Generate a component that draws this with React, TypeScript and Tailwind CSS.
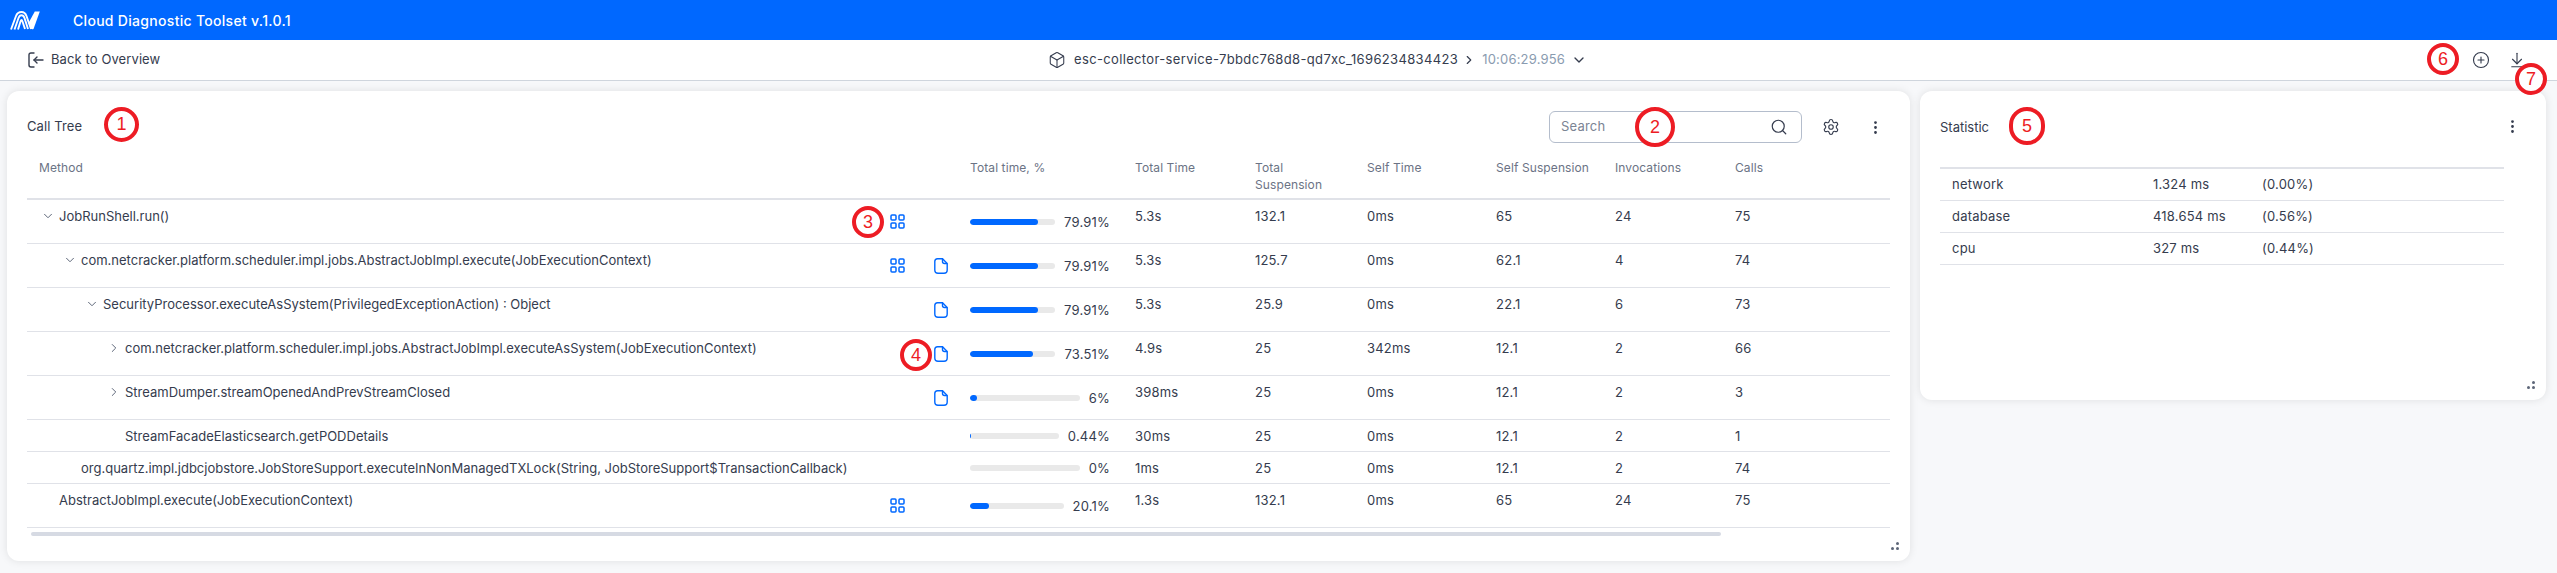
import React from 'react';
import { Box, ChevronDown, ChevronRight, CirclePlus, ArrowDownToLine, EllipsisVertical, Search, Settings } from 'lucide-react';

interface Row {
  method: string;
  depth: number;
  caret?: 'open' | 'closed';
  grid?: boolean;
  file?: boolean;
  percent: number;
  label: string;
  totalTime: string;
  totalSuspension: string;
  selfTime: string;
  selfSuspension: string;
  invocations: string;
  calls: string;
  tall: boolean;
}

const rows: Row[] = [
  { method: 'JobRunShell.run()', depth: 0, caret: 'open', grid: true, percent: 79.91, label: '79.91%', totalTime: '5.3s', totalSuspension: '132.1', selfTime: '0ms', selfSuspension: '65', invocations: '24', calls: '75', tall: true },
  { method: 'com.netcracker.platform.scheduler.impl.jobs.AbstractJobImpl.execute(JobExecutionContext)', depth: 1, caret: 'open', grid: true, file: true, percent: 79.91, label: '79.91%', totalTime: '5.3s', totalSuspension: '125.7', selfTime: '0ms', selfSuspension: '62.1', invocations: '4', calls: '74', tall: true },
  { method: 'SecurityProcessor.executeAsSystem(PrivilegedExceptionAction) : Object', depth: 2, caret: 'open', file: true, percent: 79.91, label: '79.91%', totalTime: '5.3s', totalSuspension: '25.9', selfTime: '0ms', selfSuspension: '22.1', invocations: '6', calls: '73', tall: true },
  { method: 'com.netcracker.platform.scheduler.impl.jobs.AbstractJobImpl.executeAsSystem(JobExecutionContext)', depth: 3, caret: 'closed', file: true, percent: 73.51, label: '73.51%', totalTime: '4.9s', totalSuspension: '25', selfTime: '342ms', selfSuspension: '12.1', invocations: '2', calls: '66', tall: true },
  { method: 'StreamDumper.streamOpenedAndPrevStreamClosed', depth: 3, caret: 'closed', file: true, percent: 6, label: '6%', totalTime: '398ms', totalSuspension: '25', selfTime: '0ms', selfSuspension: '12.1', invocations: '2', calls: '3', tall: true },
  { method: 'StreamFacadeElasticsearch.getPODDetails', depth: 3, percent: 0.44, label: '0.44%', totalTime: '30ms', totalSuspension: '25', selfTime: '0ms', selfSuspension: '12.1', invocations: '2', calls: '1', tall: false },
  { method: 'org.quartz.impl.jdbcjobstore.JobStoreSupport.executeInNonManagedTXLock(String, JobStoreSupport$TransactionCallback)', depth: 1, percent: 0, label: '0%', totalTime: '1ms', totalSuspension: '25', selfTime: '0ms', selfSuspension: '12.1', invocations: '2', calls: '74', tall: false },
  { method: 'AbstractJobImpl.execute(JobExecutionContext)', depth: 0, grid: true, percent: 20.1, label: '20.1%', totalTime: '1.3s', totalSuspension: '132.1', selfTime: '0ms', selfSuspension: '65', invocations: '24', calls: '75', tall: true },
];

const stats = [
  { name: 'network', value: '1.324 ms', share: '(0.00%)' },
  { name: 'database', value: '418.654 ms', share: '(0.56%)' },
  { name: 'cpu', value: '327 ms', share: '(0.44%)' },
];

const marks = [
  { n: '1', cls: 'left-[104px] top-[107px] w-[35px] h-[35px]' },
  { n: '2', cls: 'left-[1635px] top-[107px] w-[40px] h-[40px]' },
  { n: '3', cls: 'left-[852px] top-[206px] w-[32px] h-[32px]' },
  { n: '4', cls: 'left-[900px] top-[339px] w-[32px] h-[32px]' },
  { n: '5', cls: 'left-[2009px] top-[107px] w-[36px] h-[38px]' },
  { n: '6', cls: 'left-[2427px] top-[43px] w-[32px] h-[32px]' },
  { n: '7', cls: 'left-[2515px] top-[63px] w-[32px] h-[32px]' },
];

const GRID = 'grid grid-cols-[931px_165px_120px_112px_129px_119px_120px_167px]';

function Logo() {
  return (
    <svg width="30" height="19" viewBox="0 0 30 19" fill="none" stroke="white" strokeWidth="1.9" className="ml-[10px]">
      <path d="M1 18.5 L6 5 Q7.5 1 11.5 1 Q15 1 16.5 5 L21 18" />
      <path d="M4.5 18.5 L8.5 7 Q9.5 4.3 11.5 4.3 Q13.5 4.3 14.5 7 L18 18" />
      <path d="M8 18.5 L10.5 10.5 Q11.5 7.5 12.5 10.5 L15 18" />
      <path d="M18.5 12 L20.5 17 Q21.5 18.8 23.5 18 L29.8 0.5 L24.8 0.5 Z" fill="white" stroke="none" />
    </svg>
  );
}

function BackIcon() {
  return (
    <svg width="16" height="16" viewBox="0 0 16 16" fill="none" stroke="#353c4e" strokeWidth="1.4" strokeLinecap="round" strokeLinejoin="round">
      <path d="M6 1 H3 Q1 1 1 3 V13 Q1 15 3 15 H6" />
      <path d="M15 8 H6" />
      <path d="M9 5 L6 8 L9 11" />
    </svg>
  );
}

function GridIcon() {
  return (
    <svg width="15" height="15" viewBox="0 0 15 15" fill="none" stroke="#0068ff" strokeWidth="1.5">
      <rect x="1" y="1" width="5" height="5" rx="1" />
      <rect x="9" y="1" width="5" height="5" rx="1" />
      <rect x="1" y="9" width="5" height="5" rx="1" />
      <rect x="9" y="9" width="5" height="5" rx="1" />
    </svg>
  );
}

function FileIcon() {
  return (
    <svg width="14" height="16" viewBox="0 0 14 16" fill="none" stroke="#0068ff" strokeWidth="1.4">
      <path d="M3.5 0.8 H8.5 L13.2 5.5 V12 Q13.2 15.2 10 15.2 H4 Q0.8 15.2 0.8 12 V3.5 Q0.8 0.8 3.5 0.8 Z" />
      <path d="M8.5 0.8 V3.5 Q8.5 5.5 10.5 5.5 H13.2" />
    </svg>
  );
}

function ResizeGrip() {
  return (
    <div className="absolute right-[11px] bottom-[11px] grid grid-cols-2 gap-[2px] w-[8px]">
      <span className="w-[3px] h-[3px]" />
      <span className="w-[3px] h-[3px] rounded-full bg-[#5d6678]" />
      <span className="w-[3px] h-[3px] rounded-full bg-[#5d6678]" />
      <span className="w-[3px] h-[3px] rounded-full bg-[#5d6678]" />
    </div>
  );
}

export default function App() {
  return (
    <div className="relative w-[2557px] h-[573px] overflow-hidden bg-[#f7f8fa] font-['Inter',sans-serif] text-[13px] text-[#353c4e]">
      {/* Header */}
      <div className="h-[40px] bg-[#0068ff] flex items-center text-white">
        <Logo />
        <span className="ml-[33px] text-[14px] font-medium tracking-[0.3px]">Cloud Diagnostic Toolset v.1.0.1</span>
      </div>

      {/* Toolbar */}
      <div className="relative h-[41px] bg-white border-b border-[#cfd5dd] flex items-center justify-between pl-[28px] pr-[31px]">
        <div className="flex items-center gap-[7px] tracking-[0.1px]">
          <BackIcon />
          <span>Back to Overview</span>
        </div>
        <div className="absolute left-[1048px] flex items-center">
          <Box size={18} strokeWidth={1.4} />
          <span className="ml-[8px] tracking-[0.35px]">esc-collector-service-7bbdc768d8-qd7xc_1696234834423</span>
          <ChevronRight size={14} className="ml-[4px]" />
          <span className="ml-[6px] text-[#8a9bb0] tracking-[0.2px]">10:06:29.956</span>
          <ChevronDown size={16} className="ml-[6px]" />
        </div>
        <div className="flex items-center gap-[18px]">
          <CirclePlus size={18} strokeWidth={1.5} />
          <ArrowDownToLine size={18} strokeWidth={1.5} />
        </div>
      </div>

      <div className="flex items-start pl-[7px] pt-[10px] gap-[10px]">
        {/* Call tree card */}
        <div className="relative w-[1903px] h-[470px] bg-white rounded-[12px] shadow-[0_0_8px_rgba(0,0,0,0.1)] px-[20px]">
          <div className="h-[64px] flex items-center justify-between pt-[8px]">
            <span className="tracking-[0.1px]">Call Tree</span>
            <div className="flex items-center mr-[8px]">
              <div className="w-[253px] h-[32px] border border-[#b4bdcc] rounded-[6px] flex items-center justify-between pl-[11px] pr-[13px]">
                <span className="text-[#7b8494] tracking-[0.2px]">Search</span>
                <Search size={18} strokeWidth={1.6} />
              </div>
              <Settings size={18} strokeWidth={1.5} className="ml-[20px]" />
              <EllipsisVertical size={17} strokeWidth={2} className="ml-[27px] mr-[-2px]" />
            </div>
          </div>

          {/* Table head */}
          <div className={`${GRID} h-[45px] border-b-2 border-[#e0e2e8] text-[12px] leading-[17px] text-[#6b7385] tracking-[0.1px] pt-[4px]`}>
            <span className="pl-[12px]">Method</span>
            <span className="pl-[12px]">Total time, %</span>
            <span className="pl-[12px]">Total Time</span>
            <span className="pl-[12px] w-[90px]">Total Suspension</span>
            <span className="pl-[12px]">Self Time</span>
            <span className="pl-[12px]">Self Suspension</span>
            <span className="pl-[12px]">Invocations</span>
            <span className="pl-[12px]">Calls</span>
          </div>

          {/* Table rows */}
          {rows.map((row) => (
            <div
              key={row.method}
              className={`${GRID} border-b border-[#e0e2e8] leading-[16px] tracking-[0.2px] ${row.tall ? 'h-[44px]' : 'h-[32px]'}`}
            >
              <div className="relative h-full">
                <div className="flex items-start pt-[8px] tracking-normal">
                  {row.depth === 0 && <span className="w-[32px] shrink-0" />}
                  {row.depth === 1 && <span className="w-[54px] shrink-0" />}
                  {row.depth === 2 && <span className="w-[76px] shrink-0" />}
                  {row.depth === 3 && <span className="w-[98px] shrink-0" />}
                  <span>{row.method}</span>
                </div>
                {row.caret && (
                  <span className="absolute top-[9px]" style={{ left: 14 + row.depth * 22 }}>
                    {row.caret === 'open' ? (
                      <ChevronDown size={14} strokeWidth={1.7} className="text-[#5d6678]" />
                    ) : (
                      <ChevronRight size={14} strokeWidth={1.7} className="text-[#5d6678]" />
                    )}
                  </span>
                )}
                {row.grid && (
                  <span className="absolute left-[863px] top-0 h-full flex items-center"><GridIcon /></span>
                )}
                {row.file && (
                  <span className="absolute left-[907px] top-0 h-full flex items-center"><FileIcon /></span>
                )}
              </div>
              <div className="flex items-center pl-[12px] pr-[13px] gap-[9px]">
                <div className="flex-1 h-[6px] rounded-full bg-[#e9e9e9] overflow-hidden">
                  <div className="h-full rounded-full bg-[#0068ff]" style={{ width: `${row.percent}%` }} />
                </div>
                <span>{row.label}</span>
              </div>
              <span className="pl-[12px] pt-[8px]">{row.totalTime}</span>
              <span className="pl-[12px] pt-[8px]">{row.totalSuspension}</span>
              <span className="pl-[12px] pt-[8px]">{row.selfTime}</span>
              <span className="pl-[12px] pt-[8px]">{row.selfSuspension}</span>
              <span className="pl-[12px] pt-[8px]">{row.invocations}</span>
              <span className="pl-[12px] pt-[8px]">{row.calls}</span>
            </div>
          ))}

          {/* Horizontal scroll thumb */}
          <div className="ml-[4px] mt-[4px] w-[1690px] h-[4px] rounded-full bg-[#d6dae3]" />
          <ResizeGrip />
        </div>

        {/* Statistic card */}
        <div className="relative w-[626px] h-[309px] bg-white rounded-[12px] shadow-[0_0_8px_rgba(0,0,0,0.1)] px-[20px]">
          <div className="h-[76px] flex items-start justify-between pt-[28px]">
            <span className="leading-[16px]">Statistic</span>
            <EllipsisVertical size={17} strokeWidth={2} className="mr-[5px] -mt-px" />
          </div>
          <div className="w-[564px] border-t-2 border-[#e0e2e8]">
            {stats.map((s) => (
              <div key={s.name} className="h-[32px] border-b border-[#e0e2e8] flex items-center tracking-[0.2px]">
                <span className="pl-[12px] w-[213px]">{s.name}</span>
                <span className="w-[109px]">{s.value}</span>
                <span>{s.share}</span>
              </div>
            ))}
          </div>
          <ResizeGrip />
        </div>
      </div>

      {/* Numbered annotation marks */}
      {marks.map((m) => (
        <div
          key={m.n}
          className={`absolute ${m.cls} rounded-full border-[4px] border-[#ed1c24] bg-white flex items-center justify-center text-[18px] text-[#ed1c24] font-['Liberation_Sans',sans-serif]`}
        >
          {m.n}
        </div>
      ))}
    </div>
  );
}
